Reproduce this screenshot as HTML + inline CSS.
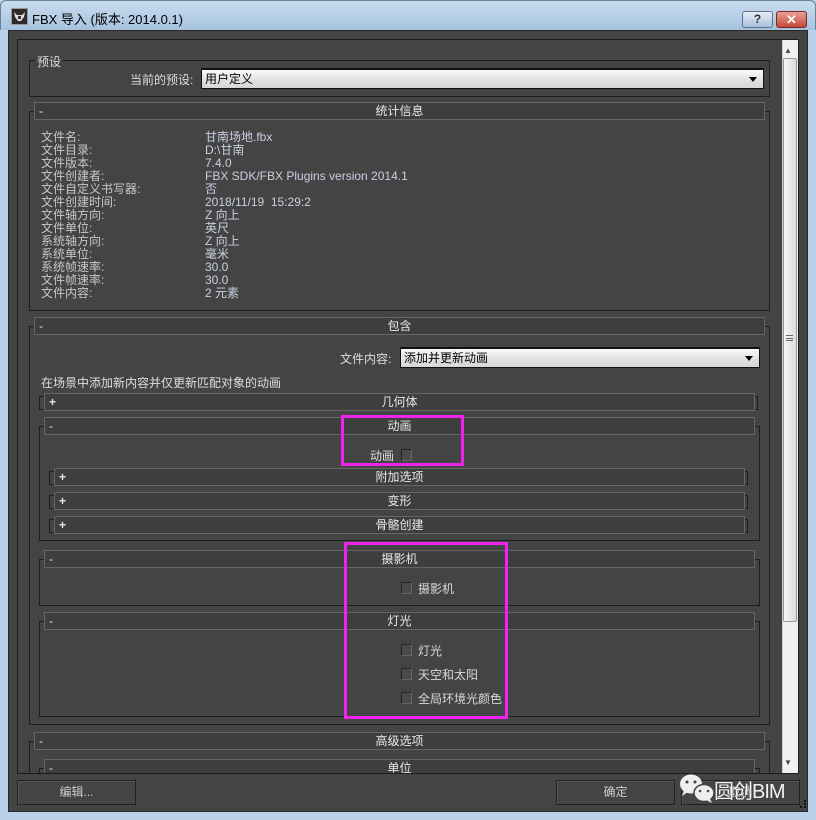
<!DOCTYPE html>
<html><head><meta charset="utf-8"><style>
*{margin:0;padding:0;box-sizing:border-box}
body{width:816px;height:820px;overflow:hidden;background:#b9d1ea;font-family:"Liberation Sans","Noto Sans CJK SC",sans-serif;font-size:12px;color:#d8d8d8;position:relative}
.a{position:absolute}
#title{left:0;top:0;width:816px;height:30px;background:linear-gradient(#c9dcef,#a6c2df);border:1px solid #6b7f95;border-bottom:none;border-radius:6px 6px 0 0}
#client{left:8px;top:30px;width:800px;height:782px;background:#444;border:1px solid #2a2a2a}
.hdr{position:absolute;height:18px;background:#3e3e3e;border:1px solid #666;color:#e8e8e8;font-size:12px;line-height:16px;text-align:center}
.hdr b{position:absolute;left:4px;top:0;font-weight:normal}
.grp{position:absolute;border:1px solid #1e1e1e;border-top:1px solid #1e1e1e}
.br{position:absolute;width:5px;height:14px;border:1px solid #1e1e1e;border-right:none}
.brr{position:absolute;width:5px;height:14px;border:1px solid #1e1e1e;border-left:none}
.dd{position:absolute;height:21px;background:linear-gradient(#fafafa,#e2e2e2 55%,#d6d6d6);border:1px solid #111;border-top:2px solid #111;color:#000;font-size:12px;line-height:18px;padding-left:3px}
.dd:after{content:"";position:absolute;right:6px;top:7px;border:4px solid transparent;border-top:5px solid #000}
.cb{position:absolute;width:11px;height:12px;background:#4a4a4a;border:1px solid #222;border-right-color:#666;border-bottom-color:#666}
.btn{position:absolute;height:25px;border:1px solid #222;background:#444;box-shadow:inset 1px 1px #555;color:#ccc;text-align:center;line-height:23px}
.mg{position:absolute;border:3px solid #f022f0}
.st{position:absolute;left:41px;line-height:13px;font-size:12px;color:#c8c8c8}
</style></head><body>
<div id="title" class="a">
  <svg class="a" style="left:10px;top:7px" width="17" height="17" viewBox="0 0 17 17">
    <rect x="0.5" y="0.5" width="16" height="16" fill="#2a2a2a" stroke="#999"/>
    <path d="M3 4 L6 7 L11 7 L14 4 L13 9 L10 13 L7 13 L4 9Z" fill="#ddd"/>
    <rect x="7" y="8" width="3" height="3" fill="#333"/>
  </svg>
  <div class="a" style="left:31px;top:8px;font-size:13px;color:#000">FBX 导入 (版本: 2014.0.1)</div>
  <div class="a" style="left:741px;top:10px;width:31px;height:17px;border:1px solid #5c7290;border-radius:3px;background:linear-gradient(#e6eef8,#a8bfdc);color:#333;text-align:center;font-size:12px;line-height:15px;font-weight:bold">?</div>
  <div class="a" style="left:775px;top:10px;width:31px;height:17px;border:1px solid #7a2a20;border-radius:3px;background:linear-gradient(#e9a193,#c4493a);color:#fff;text-align:center;font-size:13px;line-height:15px;font-weight:bold">✕</div>
</div>
<div id="client" class="a"></div>
<div class="a" style="left:17px;top:39px;width:782px;height:735px;border:1px solid #1c1c1c"></div>
<div class="a" style="left:782px;top:40px;width:16px;height:733px;background:#f0f0f0;border-left:1px solid #ccc"></div>
<div class="a" style="left:784px;top:46px;color:#444;font-size:8px">▲</div>
<div class="a" style="left:783px;top:58px;width:14px;height:564px;background:linear-gradient(90deg,#f5f5f5,#dcdcdc);border:1px solid #999;border-radius:2px"></div>
<div class="a" style="left:786px;top:335px;width:7px;height:6px;border-top:1px solid #666;border-bottom:1px solid #666"></div>
<div class="a" style="left:786px;top:338px;width:7px;height:1px;background:#666"></div>
<div class="a" style="left:784px;top:758px;color:#444;font-size:8px">▼</div>

<div class="grp" style="left:29px;top:60px;width:741px;height:37px"></div>
<div class="a" style="left:35px;top:53px;background:#444;padding:0 2px;color:#ddd">预设</div>
<div class="a" style="left:130px;top:71px;color:#ddd">当前的预设:</div>
<div class="dd" style="left:201px;top:68px;width:563px">用户定义</div>

<div class="grp" style="left:29px;top:111px;width:741px;height:200px"></div>
<div class="hdr" style="left:34px;top:102px;width:731px"><b>-</b>统计信息</div>
<div class="st" style="top:131px">文件名:<br>文件目录:<br>文件版本:<br>文件创建者:<br>文件自定义书写器:<br>文件创建时间:<br>文件轴方向:<br>文件单位:<br>系统轴方向:<br>系统单位:<br>系统帧速率:<br>文件帧速率:<br>文件内容:</div>
<div class="st" style="left:205px;top:131px;color:#c8d0e0">甘南场地.fbx<br>D:\甘南<br>7.4.0<br>FBX SDK/FBX Plugins version 2014.1<br>否<br>2018/11/19&nbsp; 15:29:2<br>Z 向上<br>英尺<br>Z 向上<br>毫米<br>30.0<br>30.0<br>2 元素</div>

<div class="grp" style="left:29px;top:326px;width:741px;height:399px"></div>
<div class="hdr" style="left:34px;top:317px;width:731px"><b>-</b>包含</div>
<div class="a" style="left:340px;top:350px;color:#ddd">文件内容:</div>
<div class="dd" style="left:400px;top:347px;width:360px">添加并更新动画</div>
<div class="a" style="left:41px;top:374px;color:#ddd">在场景中添加新内容并仅更新匹配对象的动画</div>

<div class="br" style="left:39px;top:396px"></div><div class="brr" style="left:753px;top:396px"></div>
<div class="hdr" style="left:44px;top:393px;width:711px"><b style="font-weight:bold">+</b>几何体</div>

<div class="grp" style="left:39px;top:426px;width:721px;height:115px"></div>
<div class="hdr" style="left:44px;top:417px;width:711px"><b>-</b>动画</div>
<div class="a" style="left:370px;top:447px;color:#ddd">动画</div>
<div class="cb" style="left:401px;top:449px"></div>

<div class="br" style="left:49px;top:471px"></div><div class="brr" style="left:743px;top:471px"></div>
<div class="hdr" style="left:54px;top:468px;width:691px"><b style="font-weight:bold">+</b>附加选项</div>
<div class="br" style="left:49px;top:495px"></div><div class="brr" style="left:743px;top:495px"></div>
<div class="hdr" style="left:54px;top:492px;width:691px"><b style="font-weight:bold">+</b>变形</div>
<div class="br" style="left:49px;top:519px"></div><div class="brr" style="left:743px;top:519px"></div>
<div class="hdr" style="left:54px;top:516px;width:691px"><b style="font-weight:bold">+</b>骨骼创建</div>

<div class="grp" style="left:39px;top:559px;width:721px;height:47px"></div>
<div class="hdr" style="left:44px;top:550px;width:711px"><b>-</b>摄影机</div>
<div class="cb" style="left:401px;top:582px"></div>
<div class="a" style="left:418px;top:580px">摄影机</div>

<div class="grp" style="left:39px;top:621px;width:721px;height:96px"></div>
<div class="hdr" style="left:44px;top:612px;width:711px"><b>-</b>灯光</div>
<div class="cb" style="left:401px;top:644px"></div><div class="a" style="left:418px;top:642px">灯光</div>
<div class="cb" style="left:401px;top:668px"></div><div class="a" style="left:418px;top:666px">天空和太阳</div>
<div class="cb" style="left:401px;top:692px"></div><div class="a" style="left:418px;top:690px">全局环境光颜色</div>

<div class="grp" style="left:29px;top:741px;width:741px;height:40px;border-bottom:none"></div>
<div class="hdr" style="left:34px;top:732px;width:731px"><b>-</b>高级选项</div>
<div class="grp" style="left:39px;top:768px;width:721px;height:10px;border-bottom:none"></div>
<div class="hdr" style="left:44px;top:759px;width:711px;height:14px;border-bottom:none;overflow:hidden"><b>-</b>单位</div>
<div class="a" style="left:9px;top:774px;width:798px;height:37px;background:#444"></div>

<div class="mg" style="left:341px;top:415px;width:123px;height:51px"></div>
<div class="mg" style="left:344px;top:542px;width:164px;height:177px"></div>

<div class="btn" style="left:17px;top:780px;width:119px">编辑...</div>
<div class="btn" style="left:556px;top:780px;width:119px">确定</div>
<div class="btn" style="left:681px;top:780px;width:119px">取消</div>

<svg class="a" style="left:675px;top:768px" width="50" height="40" viewBox="0 0 50 40">
<ellipse cx="16" cy="16" rx="11" ry="9.5" fill="#eee"/>
<path d="M9 23 L7 28 L13 24Z" fill="#eee"/>
<ellipse cx="29" cy="25" rx="10" ry="8.5" fill="#eee" stroke="#444" stroke-width="1.5"/>
<path d="M35 31 L37 35 L31 32Z" fill="#eee"/>
<circle cx="12" cy="14" r="1.5" fill="#444"/><circle cx="20" cy="14" r="1.5" fill="#444"/>
<circle cx="25" cy="23" r="1.3" fill="#444"/><circle cx="33" cy="23" r="1.3" fill="#444"/>
</svg>
<div class="a" style="left:714px;top:775px;font-size:20px;color:#f2f2f2;letter-spacing:-1px">圆创BIM</div>
<div class="a" style="left:800px;top:800px;width:6px;height:8px;border-right:2px dotted #111;border-bottom:2px dotted #111"></div>
</body></html>
